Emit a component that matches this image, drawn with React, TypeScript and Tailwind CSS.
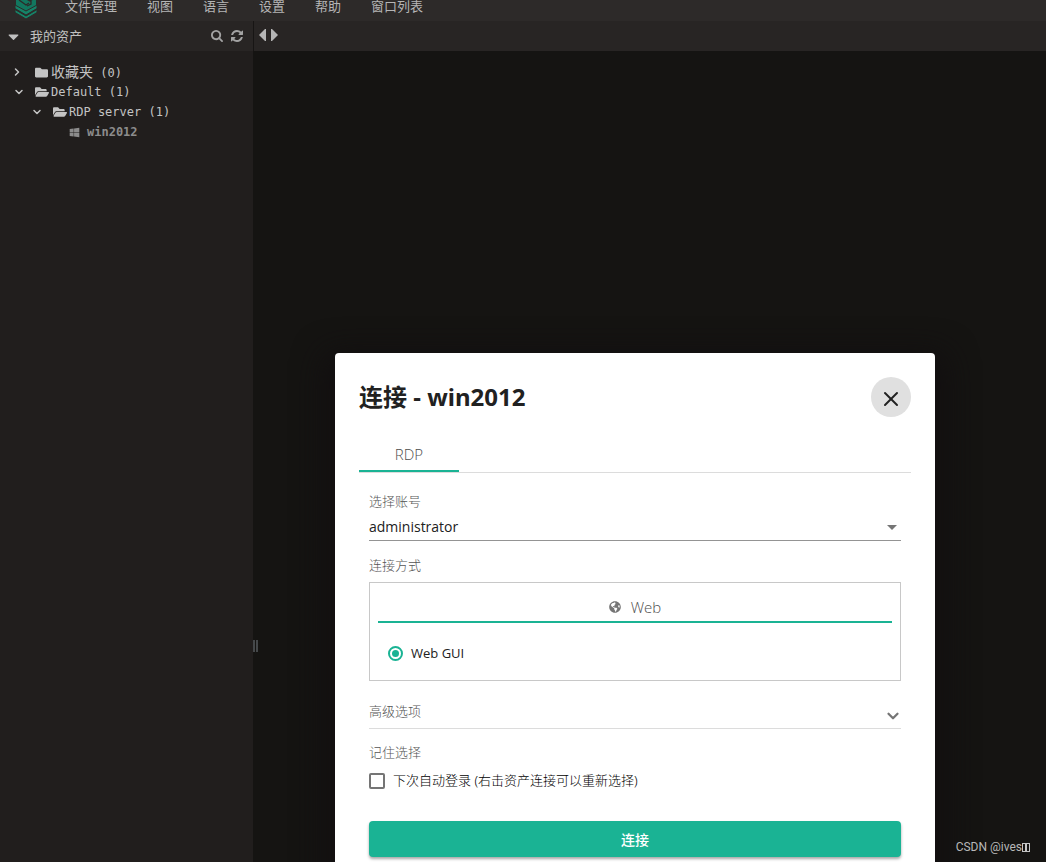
import React, { useState } from 'react';
import { FaCaretDown, FaFolder, FaFolderOpen, FaGlobeAmericas, FaWindows } from 'react-icons/fa';
import { ChevronDown, ChevronRight, X } from 'lucide-react';

const menus = ['文件管理', '视图', '语言', '设置', '帮助', '窗口列表'];

const tree = [
  { label: '收藏夹', count: 0, level: 0, open: false, kind: 'folder', size: 'text-[14px]' },
  { label: 'Default', count: 1, level: 0, open: true, kind: 'folder', size: 'text-[12px]' },
  { label: 'RDP server', count: 1, level: 1, open: true, kind: 'folder', size: 'text-[12px]' },
  { label: 'win2012', level: 2, open: false, kind: 'host', size: 'text-[12px]' },
];

const indents = ['pl-[13px]', 'pl-[31px]', 'pl-[69px]'];

const Logo: React.FC = () => (
  <svg width="24" height="32" viewBox="0 0 24 32" fill="none" className="shrink-0" aria-hidden="true">
    <path d="M2 4h20v12l-10 6-10-6z" fill="#12775f" />
    <path d="M5 10l7 5 3-2M9 7l7 4 3-2M13 16l4-2v-3" stroke="#2d2a29" strokeWidth="1.3" />
    <path d="M1 15l11 6 11-6v3.500l-11 6.500-11-6.500z" fill="#158368" stroke="#2d2a29" />
    <path d="M1 19.500l11 6.500 11-6.500v3l-11 6.500-11-6.500z" fill="#158368" stroke="#2d2a29" />
  </svg>
);

const SearchIcon: React.FC = () => (
  <svg width="12" height="12" viewBox="0 0 1664 1664" fill="currentColor" aria-hidden="true">
    <path d="M1152 704q0-185-131.500-316.500T704 256 387.500 387.500 256 704t131.500 316.500T704 1152t316.500-131.500T1152 704zm512 832q0 52-38 90t-90 38q-54 0-90-38l-343-342q-179 124-399 124-143 0-273.500-55.500t-225-150-150-225T0 704t55.500-273.500 150-225 225-150T704 0t273.500 55.500 225 150 150 225T1408 704q0 220-124 399l343 343q37 37 37 90z" />
  </svg>
);

const RefreshIcon: React.FC = () => (
  <svg width="12" height="12" viewBox="0 0 1536 1536" fill="currentColor" aria-hidden="true">
    <path d="M1511 928q0 5-1 7-64 268-268 434.500T764 1536q-146 0-282.500-55T238 1324l-129 129q-19 19-45 19t-45-19-19-45V960q0-26 19-45t45-19h448q26 0 45 19t19 45-19 45l-137 137q71 66 161 102t187 36q134 0 250-65t186-179q11-17 53-117 8-23 30-23h192q13 0 22.500 9.500t9.500 22.500zm25-800v448q0 26-19 45t-45 19h-448q-26 0-45-19t-19-45 19-45l138-138Q969 256 768 256q-134 0-250 65T332 500q-11 17-53 117-8 23-30 23H50q-13 0-22.500-9.500T18 608v-7q65-268 270-434.500T768 0q146 0 284 55.500T1297 212l130-129q19-19 45-19t45 19 19 45z" />
  </svg>
);

const Sidebar: React.FC = () => (
  <aside className="flex w-[253px] shrink-0 flex-col bg-[#211e1d]">
    <div className="flex h-[30px] items-center bg-[#282524] pl-[5px] pr-[10px] text-[#c0c0c0]">
      <FaCaretDown size={17} className="mr-2" />
      <span className="flex-1 pt-[2px] text-[13px]">我的资产</span>
      <button type="button" aria-label="搜索" className="mr-2 text-[#a3a3a3]"><SearchIcon /></button>
      <button type="button" aria-label="刷新" className="text-[#a3a3a3]"><RefreshIcon /></button>
    </div>
    <ul className="pt-[11px] font-['DejaVu_Sans_Mono','Noto_Sans_CJK_SC',monospace] text-[12px] leading-5 text-[#c4c4c4]">
      {tree.map((node) => (
        <li key={node.label} className={`flex h-5 items-center ${indents[node.level]}`}>
          {node.kind === 'folder' ? (
            <>
              <span className="w-[22px]">
                {node.open
                  ? <ChevronDown size={12} strokeWidth={3} />
                  : <ChevronRight size={12} strokeWidth={3} className="-ml-[2px]" />}
              </span>
              {node.open
                ? <FaFolderOpen size={14} className="mr-[2px] shrink-0" />
                : <FaFolder size={13} className="mr-[3px] shrink-0" />}
              <span className="whitespace-pre">
                <span className={node.size}>{node.label}</span>
                {` (${node.count})`}
              </span>
            </>
          ) : (
            <>
              <FaWindows size={11} className="mr-[7px] text-[#8c8c8c]" />
              <span className="font-bold text-[#8c8c8c]">{node.label}</span>
            </>
          )}
        </li>
      ))}
    </ul>
  </aside>
);

const ConnectDialog: React.FC = () => {
  const [remember, setRemember] = useState(false);

  return (
    <div
      role="dialog"
      aria-labelledby="dialog-title"
      className="w-[600px] shrink-0 rounded bg-white p-6 text-[#212121] shadow-[0_11px_30px_12px_#120f10]"
    >
      <div className="flex h-10 items-center justify-between">
        <h2 id="dialog-title" className="text-[24px] font-bold leading-10">连接 - win2012</h2>
        <button type="button" aria-label="关闭" className="flex size-10 items-center justify-center rounded-full bg-[#e0e0e0] pt-1">
          <X size={24} strokeWidth={2} />
        </button>
      </div>

      <div role="tablist" className="mt-5 flex h-9 border-b border-[#dcdcdc]">
        <button type="button" role="tab" aria-selected="true" className="w-[100px] border-b-2 border-[#1ab394] pt-[2px] font-['Open_Sans',sans-serif] text-[15px] font-light text-[#4d4d4d]">
          RDP
        </button>
      </div>

      <form className="px-[10px] pt-[18px] text-[13px]" onSubmit={(e) => e.preventDefault()}>
        <label htmlFor="account" className="block font-light leading-5 text-[#555]">选择账号</label>
        <div className="relative mt-[2px]">
          <select id="account" className="block h-7 w-full appearance-none border-b border-[#949494] font-['Open_Sans',sans-serif] text-[14px]">
            <option>administrator</option>
          </select>
          <svg className="pointer-events-none absolute right-1 top-3" width="10" height="5" viewBox="0 0 10 5" aria-hidden="true">
            <path d="M0 0h10L5 5z" fill="#757575" />
          </svg>
        </div>

        <fieldset className="mt-[14px]">
          <legend className="block font-light leading-5 text-[#555]">连接方式</legend>
          <div className="mt-[7px] border border-[#c8c8c8] px-2 pb-[17px] pt-2">
            <button type="button" className="flex h-8 w-full items-center justify-center gap-[10px] border-b-2 border-[#1ab394] pt-[2px] font-['Open_Sans',sans-serif] text-[15px] font-light text-[#4d4d4d]">
              <FaGlobeAmericas size={12} color="#757575" />
              Web
            </button>
            <label className="mt-5 flex h-5 items-center gap-2 pl-[10px]">
              <input
                type="radio"
                name="method"
                defaultChecked
                className="size-[15px] appearance-none rounded-full border-2 border-[#1ab394] bg-[#1ab394] bg-clip-content p-[2px]"
              />
              <span className="pt-[2px] font-['Open_Sans',sans-serif]">Web GUI</span>
            </label>
          </div>
        </fieldset>

        <button type="button" className="mt-5 flex h-7 w-full justify-between border-b border-[#dcdcdc] font-light text-[#555]">
          <span className="leading-5">高级选项</span>
          <ChevronDown size={18} strokeWidth={3} className="-mr-px mt-[6px] text-[#757575]" />
        </button>

        <p className="mt-[13px] font-light leading-5 text-[#555]">记住选择</p>
        <label className="mt-[9px] flex h-5 items-center gap-2">
          <input
            type="checkbox"
            checked={remember}
            onChange={(e) => setRemember(e.target.checked)}
            className="size-4 appearance-none rounded-xs border-2 border-[#757575] checked:bg-[#1ab394]"
          />
          <span className="font-light text-black">下次自动登录 (右击资产连接可以重新选择)</span>
        </label>

        <button type="submit" className="mt-[30px] h-9 w-full rounded bg-[#1ab394] text-[14px] font-medium text-white shadow-[0_2px_3px_rgba(0,0,0,0.35)]">
          连接
        </button>
      </form>
    </div>
  );
};

const App: React.FC = () => {
  return (
    <div className="relative flex h-screen flex-col overflow-hidden bg-[#151412] font-['Noto_Sans','Noto_Sans_CJK_SC',sans-serif]">
      <nav className="flex h-[21px] shrink-0 items-start bg-[#2d2a29] pl-[14px] text-[13px] leading-3 text-[#b5b5b5]">
        <div className="flex h-3 items-center"><Logo /></div>
        <div className="ml-[27px] flex gap-[30px]">
          {menus.map((menu) => (
            <button key={menu} type="button" className="h-3">{menu}</button>
          ))}
        </div>
      </nav>

      <div className="flex flex-1">
        <Sidebar />
        <main className="flex flex-1 flex-col">
          <div className="flex h-[30px] gap-[3px] border-l border-[#171514] bg-[#282524] pl-[5px] pt-2">
            <button type="button" aria-label="上一个" className="h-3">
              <svg width="8" height="12" viewBox="0 0 8 12" fill="#b5b5b5"><path d="M7 0v12H6L0 6l6-6z" /></svg>
            </button>
            <button type="button" aria-label="下一个" className="h-3">
              <svg width="8" height="12" viewBox="0 0 8 12" fill="#b5b5b5"><path d="M1 0v12h1l6-6-6-6z" /></svg>
            </button>
          </div>
          <div className="flex flex-1 items-center pt-[379px]">
            <div className="h-3 w-[5px] border-x-2 border-[#45484a]" />
          </div>
        </main>
      </div>

      <div className="absolute inset-0 flex items-start justify-center pl-[224px] pt-[353px]">
        <ConnectDialog />
      </div>

      <div className="absolute bottom-[7px] right-4 flex items-center font-['Roboto',sans-serif] text-[12px] leading-4 text-[#b8b8b8]">
        CSDN @ives
        <span className="h-[9px] w-1 border border-[#c4c4c4]" />
        <span className="h-[9px] w-1 border border-[#c4c4c4]" />
      </div>
    </div>
  );
};

export default App;
